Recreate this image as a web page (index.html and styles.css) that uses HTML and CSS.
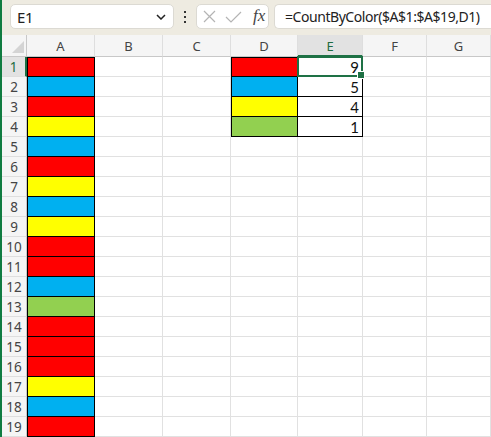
FILE: index.html
```html
<!DOCTYPE html>
<html>
<head>
<meta charset="utf-8">
<link rel="stylesheet" href="styles.css">
</head>
<body>
<div class="app">
  <div class="topbar">
    <div class="namebox">
      <span class="name">E1</span>
      <svg class="chev" width="10" height="6" viewBox="0 0 10 6"><path d="M1 1 L5 5 L9 1" fill="none" stroke="#222" stroke-width="1.5"/></svg>
    </div>
    <div class="dots"><i></i><i></i><i></i></div>
    <div class="fxbtns">
      <svg width="13" height="13" viewBox="0 0 13 13"><path d="M1 1 L12 12 M12 1 L1 12" stroke="#b4b4b4" stroke-width="1.2" fill="none"/></svg>
      <svg width="17" height="12" viewBox="0 0 17 12"><path d="M1 6 L6 11 L16 1" stroke="#b4b4b4" stroke-width="1.2" fill="none"/></svg>
      <span class="fx">fx</span>
    </div>
    <div class="formula">=CountByColor($A$1:$A$19,D1)</div>
  </div>
  <div class="grid">
    <div class="corner"><svg width="12" height="12" viewBox="0 0 12 12"><path d="M12 0 L12 12 L0 12 Z" fill="#d4d4d4"/></svg></div>
    <div class="h">A</div><div class="h">B</div><div class="h">C</div><div class="h">D</div><div class="h hsel">E</div><div class="h">F</div><div class="h">G</div>

    <div class="rh rsel">1</div><div class="c a t red"></div><div class="c"></div><div class="c"></div><div class="c d t red"></div><div class="c e t sel">9<div class="selbox"><span class="handle"></span></div></div><div class="c"></div><div class="c"></div>
    <div class="rh">2</div><div class="c a blue"></div><div class="c"></div><div class="c"></div><div class="c d blue"></div><div class="c e">5</div><div class="c"></div><div class="c"></div>
    <div class="rh">3</div><div class="c a red"></div><div class="c"></div><div class="c"></div><div class="c d yel"></div><div class="c e">4</div><div class="c"></div><div class="c"></div>
    <div class="rh">4</div><div class="c a yel"></div><div class="c"></div><div class="c"></div><div class="c d grn"></div><div class="c e">1</div><div class="c"></div><div class="c"></div>
    <div class="rh">5</div><div class="c a blue"></div><div class="c"></div><div class="c"></div><div class="c"></div><div class="c"></div><div class="c"></div><div class="c"></div>
    <div class="rh">6</div><div class="c a red"></div><div class="c"></div><div class="c"></div><div class="c"></div><div class="c"></div><div class="c"></div><div class="c"></div>
    <div class="rh">7</div><div class="c a yel"></div><div class="c"></div><div class="c"></div><div class="c"></div><div class="c"></div><div class="c"></div><div class="c"></div>
    <div class="rh">8</div><div class="c a blue"></div><div class="c"></div><div class="c"></div><div class="c"></div><div class="c"></div><div class="c"></div><div class="c"></div>
    <div class="rh">9</div><div class="c a yel"></div><div class="c"></div><div class="c"></div><div class="c"></div><div class="c"></div><div class="c"></div><div class="c"></div>
    <div class="rh">10</div><div class="c a red"></div><div class="c"></div><div class="c"></div><div class="c"></div><div class="c"></div><div class="c"></div><div class="c"></div>
    <div class="rh">11</div><div class="c a red"></div><div class="c"></div><div class="c"></div><div class="c"></div><div class="c"></div><div class="c"></div><div class="c"></div>
    <div class="rh">12</div><div class="c a blue"></div><div class="c"></div><div class="c"></div><div class="c"></div><div class="c"></div><div class="c"></div><div class="c"></div>
    <div class="rh">13</div><div class="c a grn"></div><div class="c"></div><div class="c"></div><div class="c"></div><div class="c"></div><div class="c"></div><div class="c"></div>
    <div class="rh">14</div><div class="c a red"></div><div class="c"></div><div class="c"></div><div class="c"></div><div class="c"></div><div class="c"></div><div class="c"></div>
    <div class="rh">15</div><div class="c a red"></div><div class="c"></div><div class="c"></div><div class="c"></div><div class="c"></div><div class="c"></div><div class="c"></div>
    <div class="rh">16</div><div class="c a red"></div><div class="c"></div><div class="c"></div><div class="c"></div><div class="c"></div><div class="c"></div><div class="c"></div>
    <div class="rh">17</div><div class="c a yel"></div><div class="c"></div><div class="c"></div><div class="c"></div><div class="c"></div><div class="c"></div><div class="c"></div>
    <div class="rh">18</div><div class="c a blue"></div><div class="c"></div><div class="c"></div><div class="c"></div><div class="c"></div><div class="c"></div><div class="c"></div>
    <div class="rh">19</div><div class="c a red"></div><div class="c"></div><div class="c"></div><div class="c"></div><div class="c"></div><div class="c"></div><div class="c"></div>
  </div>
</div>
</body>
</html>
```

FILE: styles.css
```css
* { box-sizing: border-box; }
html, body { margin: 0; padding: 0; background: #fff; overflow: hidden; }
body { width: 491px; height: 437px; }

.app {
  border-left: 2px solid #107c41;
  height: 437px;
  overflow: hidden;
  font-family: "Noto Sans", "Open Sans", sans-serif;
}

.topbar {
  height: 35px;
  background: #eeebe1;
  display: flex;
  align-items: flex-start;
  padding-top: 4px;
  padding-left: 8px;
}

.namebox {
  flex: 0 0 164px;
  height: 25px;
  background: #fff;
  border: 1px solid #dcdad3;
  border-radius: 5px;
  display: flex;
  align-items: center;
  justify-content: space-between;
  padding: 0 7px 0 6px;
}
.name { font-size: 15px; color: #222; letter-spacing: -0.3px; }
.chev { margin-top: 1px; }

.dots {
  flex: 0 0 22px;
  height: 25px;
  display: flex;
  flex-direction: column;
  align-items: center;
  justify-content: center;
  gap: 3px;
}
.dots i { width: 2px; height: 2px; background: #333; display: block; }

.fxbtns {
  flex: 0 0 73px;
  height: 25px;
  background: #fff;
  border: 1px solid #dcdad3;
  border-radius: 5px;
  display: flex;
  align-items: center;
  padding-left: 6px;
  gap: 9px;
}
.fx {
  font-family: "Liberation Serif", "DejaVu Serif", serif;
  font-style: italic;
  font-size: 17px;
  color: #444;
  margin-left: 2px;
  margin-top: -2px;
}

.formula {
  flex: 1 1 auto;
  min-width: 0;
  height: 25px;
  margin-left: 5px;
  margin-right: -8px;
  background: #fff;
  border: 1px solid #dcdad3;
  border-right: none;
  border-radius: 5px 0 0 5px;
  font-size: 14px;
  letter-spacing: -0.45px;
  color: #222;
  padding-left: 10px;
  line-height: 23px;
  white-space: nowrap;
  overflow: hidden;
}

.grid {
  display: grid;
  grid-template-columns: 25px 68px 68px 68px 67px 65px 64px 64px;
  grid-template-rows: 22px repeat(19, 20px);
}

.corner {
  background: #f5f5f5;
  border-right: 1px solid #c8c8c8;
  border-bottom: 1px solid #c8c8c8;
  display: flex;
  align-items: flex-end;
  justify-content: flex-end;
  padding: 0 2px 3px 0;
}

.h {
  background: #f5f5f5;
  border-right: 1px solid #dedede;
  border-bottom: 1px solid #c8c8c8;
  font-size: 13px;
  color: #444;
  display: flex;
  align-items: center;
  justify-content: center;
  padding-top: 1px;
}
.hsel {
  background: #e2e2e2;
  color: #1d6b40;
  border-bottom: 2px solid #1e7145;
}

.rh {
  background: #f5f5f5;
  border-right: 1px solid #c8c8c8;
  border-bottom: 1px solid #dedede;
  font-size: 13.5px;
  color: #444;
  display: flex;
  align-items: center;
  justify-content: center;
}
.rsel {
  background: #e2e2e2;
  color: #1d6b40;
  border-right: 2px solid #1e7145;
}

.c {
  border-right: 1px solid #e1e1e1;
  border-bottom: 1px solid #e1e1e1;
  font-family: "Lato", "Liberation Sans", sans-serif;
  font-size: 15px;
  color: #111;
}

.a, .d {
  border-right-color: #000;
  border-bottom-color: #000;
  box-shadow: inset 1px 0 0 #000;
}
.a.t, .d.t { box-shadow: inset 1px 1px 0 #000; }

.e {
  border-right-color: #000;
  border-bottom-color: #000;
  display: flex;
  align-items: flex-end;
  justify-content: flex-end;
  padding-right: 3px;
  line-height: 18px;
}
.e.t { box-shadow: inset 0 1px 0 #000; }

.red { background: #ff0000; }
.blue { background: #00b0f0; }
.yel { background: #ffff00; }
.grn { background: #92d050; }

.sel { position: relative; }
.selbox {
  position: absolute;
  top: -1px;
  left: -1px;
  right: -1px;
  bottom: -1px;
  border: 2px solid #1e7145;
  z-index: 2;
}
.handle {
  position: absolute;
  right: -4px;
  bottom: -4px;
  width: 6px;
  height: 6px;
  background: #1e7145;
  border: 1px solid #fff;
  box-sizing: content-box;
}
```
